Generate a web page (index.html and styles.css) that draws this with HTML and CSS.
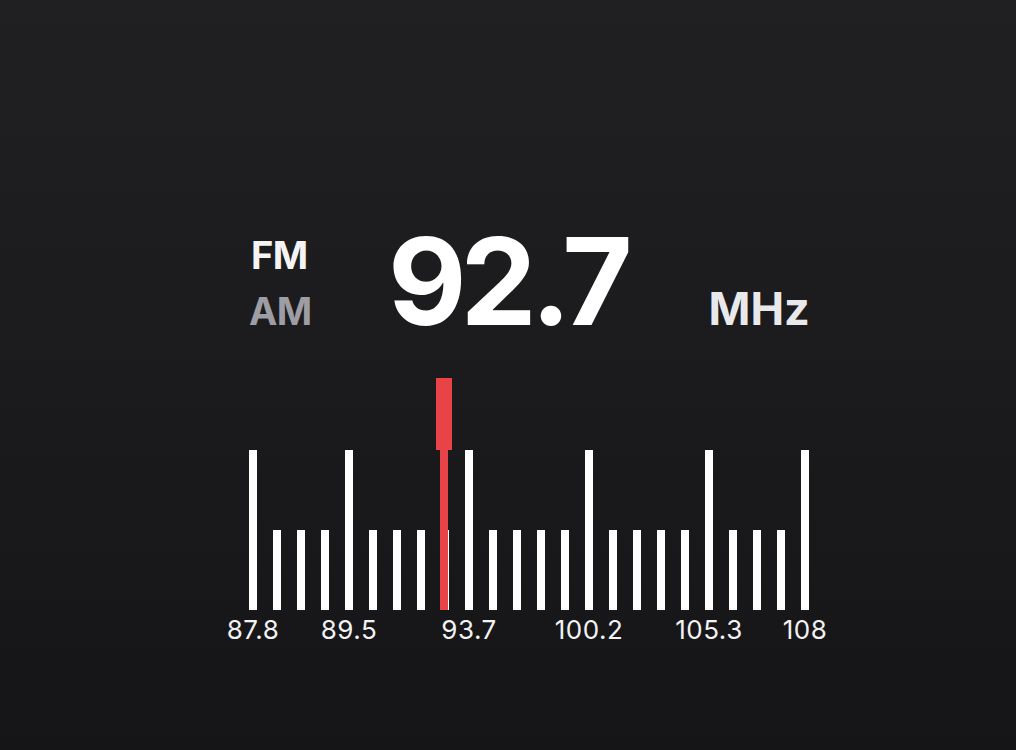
FILE: index.html
```html
<!DOCTYPE html>
<html lang="en">
<head>
<meta charset="utf-8">
<title>Radio Tuner</title>
<link rel="stylesheet" href="styles.css">
</head>
<body>
<main class="radio">
  <header class="readout">
    <div class="bands">
      <span class="band band-active">FM</span>
      <span class="band band-inactive">AM</span>
    </div>
    <div class="freq">92.7</div>
    <div class="unit">MHz</div>
  </header>
  <section class="dial">
    <div class="scale">
      <div class="tick major"><span class="bar"></span><span class="label">87.8</span></div>
      <div class="tick"><span class="bar"></span><span class="label"></span></div>
      <div class="tick"><span class="bar"></span><span class="label"></span></div>
      <div class="tick"><span class="bar"></span><span class="label"></span></div>
      <div class="tick major"><span class="bar"></span><span class="label">89.5</span></div>
      <div class="tick"><span class="bar"></span><span class="label"></span></div>
      <div class="tick"><span class="bar"></span><span class="label"></span></div>
      <div class="tick"><span class="bar"></span><span class="label"></span></div>
      <div class="tick"><span class="bar"></span><span class="label"></span></div>
      <div class="tick major"><span class="bar"></span><span class="label">93.7</span></div>
      <div class="tick"><span class="bar"></span><span class="label"></span></div>
      <div class="tick"><span class="bar"></span><span class="label"></span></div>
      <div class="tick"><span class="bar"></span><span class="label"></span></div>
      <div class="tick"><span class="bar"></span><span class="label"></span></div>
      <div class="tick major"><span class="bar"></span><span class="label">100.2</span></div>
      <div class="tick"><span class="bar"></span><span class="label"></span></div>
      <div class="tick"><span class="bar"></span><span class="label"></span></div>
      <div class="tick"><span class="bar"></span><span class="label"></span></div>
      <div class="tick"><span class="bar"></span><span class="label"></span></div>
      <div class="tick major"><span class="bar"></span><span class="label">105.3</span></div>
      <div class="tick"><span class="bar"></span><span class="label"></span></div>
      <div class="tick"><span class="bar"></span><span class="label"></span></div>
      <div class="tick"><span class="bar"></span><span class="label"></span></div>
      <div class="tick major"><span class="bar"></span><span class="label">108</span></div>
    </div>
    <div class="needle"><span class="needle-head"></span><span class="needle-stem"></span></div>
  </section>
</main>
</body>
</html>
```
FILE: styles.css
```css
* { box-sizing: border-box; }

html, body {
  margin: 0;
  height: 100%;
}

body {
  background: linear-gradient(180deg, #202022 0%, #1b1b1d 50%, #151517 100%);
  font-family: Inter, "Noto Sans", "Liberation Sans", sans-serif;
  color: #f5f5f5;
  overflow: hidden;
}

.radio {
  display: flex;
  flex-direction: column;
  align-items: flex-start;
  padding-top: 221px;
  padding-left: 249px;
}

.readout {
  display: flex;
  align-items: last baseline;
}

.bands {
  display: flex;
  flex-direction: column;
  width: 64px;
}

.band {
  font-size: 38px;
  font-weight: 700;
  line-height: 56px;
  letter-spacing: -0.5px;
}

.band-active {
  padding-left: 2px;
  color: #f4f4f5;
}
.band-inactive { color: #9d9da3; }

.freq {
  margin-left: 75px;
  font-size: 121px;
  font-weight: 700;
  line-height: 1;
  letter-spacing: -6px;
  color: #ffffff;
}

.unit {
  margin-left: 82px;
  margin-bottom: 2px;
  font-size: 45px;
  font-weight: 700;
  line-height: 1;
  color: #e9e9eb;
}

.dial {
  position: relative;
  margin-top: 108px;
}

.scale {
  display: flex;
  gap: 16px;
}

.tick {
  display: flex;
  flex-direction: column;
  align-items: center;
  width: 8px;
}

.bar {
  display: block;
  width: 8px;
  height: 80px;
  margin-top: auto;
  background: #ffffff;
}

.tick.major .bar { height: 160px; }

.label {
  display: block;
  height: 26px;
  margin-top: 7px;
  font-size: 26px;
  line-height: 26px;
  font-weight: 400;
  letter-spacing: 0.5px;
  white-space: nowrap;
  color: #f2f2f2;
}

.needle {
  position: absolute;
  left: 187px;
  top: -72px;
  display: flex;
  flex-direction: column;
  align-items: center;
  width: 16px;
}

.needle-head {
  display: block;
  width: 16px;
  height: 72px;
  background: #e94347;
}

.needle-stem {
  display: block;
  width: 8px;
  height: 160px;
  background: #e94347;
}
```
